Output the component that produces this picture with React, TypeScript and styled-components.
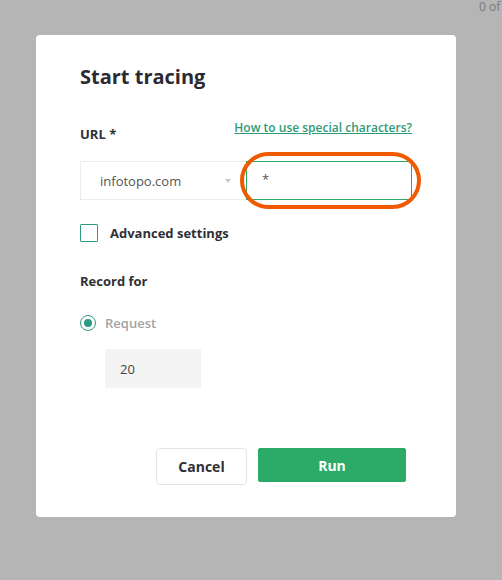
import React from "react";
import styled, { createGlobalStyle } from "styled-components";

const Global = createGlobalStyle`
  html, body { margin: 0; padding: 0; }
  body {
    background: #b5b5b5;
    font-family: "Open Sans", "Noto Sans", sans-serif;
    width: 502px;
    height: 580px;
    overflow: hidden;
  }
`;

const Page = styled.div`
  position: relative;
  width: 502px;
  height: 580px;
  padding-top: 35px;
  box-sizing: border-box;
`;

const Counter = styled.div`
  position: absolute;
  top: 0;
  left: 479px;
  font-size: 12px;
  line-height: 14px;
  color: #7a7a7a;
  white-space: nowrap;
`;

const Modal = styled.div`
  margin-left: 36px;
  width: 420px;
  height: 482px;
  box-sizing: border-box;
  background: #fff;
  border-radius: 4px;
  padding: 28px 44px 0;
  display: flex;
  flex-direction: column;
`;

const Title = styled.h2`
  margin: 0;
  font-size: 20px;
  line-height: 28px;
  font-weight: 700;
  color: #2b2a33;
`;

const LabelRow = styled.div`
  margin-top: 33px;
  display: flex;
  justify-content: space-between;
  align-items: flex-start;
`;

const Label = styled.div<{ $top?: number }>`
  margin-top: ${(p) => p.$top ?? 0}px;
  font-size: 13px;
  line-height: 20px;
  font-weight: 700;
  color: #2f2f36;
`;

const HelpLink = styled.a`
  margin-top: -6px;
  font-size: 12px;
  line-height: 20px;
  font-weight: 600;
  color: #2f9a78;
  text-decoration: underline;
`;

const InputRow = styled.div`
  margin-top: 17px;
  display: flex;
  position: relative;
`;

const Select = styled.div`
  width: 166px;
  height: 39px;
  box-sizing: border-box;
  border: 1px solid #ececec;
  border-right: none;
  display: flex;
  align-items: center;
  justify-content: space-between;
  padding: 0 15px 0 19px;
  font-size: 13px;
  color: #555;
`;

const Caret = styled.span`
  width: 0;
  height: 0;
  border-left: 3px solid transparent;
  border-right: 3px solid transparent;
  border-top: 4px solid #c8c8c8;
`;

const TextInput = styled.div`
  width: 166px;
  height: 39px;
  box-sizing: border-box;
  border: 1px solid #2eaa68;
  display: flex;
  align-items: center;
  padding: 0 0 3px 15px;
  font-size: 13px;
  color: #555;
`;

const Highlight = styled.div`
  position: absolute;
  left: 160px;
  top: -9px;
  width: 181px;
  height: 57px;
  box-sizing: border-box;
  border: 4px solid #f05a00;
  border-radius: 29px;
  pointer-events: none;
`;

const CheckRow = styled.div`
  margin-top: 23px;
  display: flex;
  align-items: center;
  gap: 12px;
`;

const CheckBox = styled.span`
  width: 18px;
  height: 18px;
  box-sizing: border-box;
  border: 1.5px solid #2e9a82;
  border-radius: 1px;
`;

const RadioRow = styled.div`
  margin-top: 22px;
  display: flex;
  align-items: center;
  gap: 9px;
`;

const Radio = styled.span`
  width: 16px;
  height: 16px;
  box-sizing: border-box;
  border: 1.5px solid #2e9a82;
  border-radius: 50%;
  display: flex;
  align-items: center;
  justify-content: center;
  &::after {
    content: "";
    width: 8px;
    height: 8px;
    border-radius: 50%;
    background: #2e9a82;
  }
`;

const RadioText = styled.span`
  font-size: 13px;
  line-height: 20px;
  font-weight: 600;
  color: #a3a3a3;
`;

const NumberBox = styled.div`
  margin: 16px 0 0 25px;
  width: 96px;
  height: 39px;
  box-sizing: border-box;
  background: #f4f4f4;
  display: flex;
  align-items: center;
  padding-left: 15px;
  font-size: 13px;
  color: #444;
`;

const Actions = styled.div`
  margin-top: 60px;
  display: flex;
  justify-content: flex-end;
  align-items: flex-start;
  gap: 11px;
  padding-right: 6px;
`;

const Button = styled.button<{ $primary?: boolean }>`
  font-family: "Open Sans", sans-serif;
  font-size: 14px;
  font-weight: 700;
  border-radius: ${(p) => (p.$primary ? "2px" : "4px")};
  box-sizing: border-box;
  cursor: pointer;
  border: 1px solid ${(p) => (p.$primary ? "#2aa866" : "#e4e4e4")};
  background: ${(p) => (p.$primary ? "#2bab67" : "#fff")};
  color: ${(p) => (p.$primary ? "#fff" : "#2f2f36")};
  width: ${(p) => (p.$primary ? "148px" : "91px")};
  height: ${(p) => (p.$primary ? "34px" : "37px")};
  padding: 0;
`;

export default function App() {
  return (
    <Page>
      <Global />
      <Counter>0 of</Counter>
      <Modal>
        <Title>Start tracing</Title>
        <LabelRow>
          <Label>URL *</Label>
          <HelpLink>How to use special characters?</HelpLink>
        </LabelRow>
        <InputRow>
          <Select>
            infotopo.com
            <Caret />
          </Select>
          <TextInput>*</TextInput>
          <Highlight />
        </InputRow>
        <CheckRow>
          <CheckBox />
          <Label>Advanced settings</Label>
        </CheckRow>
        <Label $top={28}>Record for</Label>
        <RadioRow>
          <Radio />
          <RadioText>Request</RadioText>
        </RadioRow>
        <NumberBox>20</NumberBox>
        <Actions>
          <Button>Cancel</Button>
          <Button $primary>Run</Button>
        </Actions>
      </Modal>
    </Page>
  );
}
